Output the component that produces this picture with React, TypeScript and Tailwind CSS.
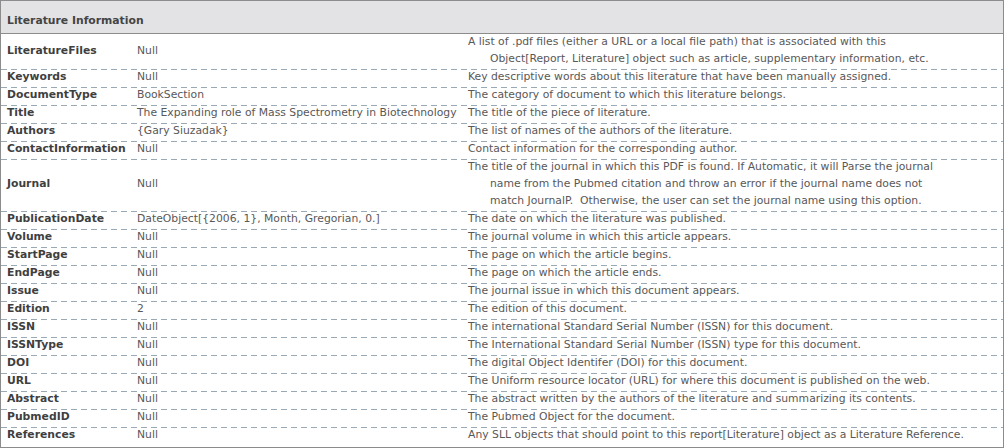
import React from 'react'

type Row = { name: string; value: string; desc: string[] }

const rows: Row[] = [
    { name: 'LiteratureFiles', value: 'Null', desc: ['A list of .pdf files (either a URL or a local file path) that is associated with this', 'Object[Report, Literature] object such as article, supplementary information, etc.'] },
    { name: 'Keywords', value: 'Null', desc: ['Key descriptive words about this literature that have been manually assigned.'] },
    { name: 'DocumentType', value: 'BookSection', desc: ['The category of document to which this literature belongs.'] },
    { name: 'Title', value: 'The Expanding role of Mass Spectrometry in Biotechnology', desc: ['The title of the piece of literature.'] },
    { name: 'Authors', value: '{Gary Siuzadak}', desc: ['The list of names of the authors of the literature.'] },
    { name: 'ContactInformation', value: 'Null', desc: ['Contact information for the corresponding author.'] },
    { name: 'Journal', value: 'Null', desc: ['The title of the journal in which this PDF is found. If Automatic, it will Parse the journal', 'name from the Pubmed citation and throw an error if the journal name does not', 'match JournalP.\u00a0 Otherwise, the user can set the journal name using this option.'] },
    { name: 'PublicationDate', value: 'DateObject[{2006, 1}, Month, Gregorian, 0.]', desc: ['The date on which the literature was published.'] },
    { name: 'Volume', value: 'Null', desc: ['The journal volume in which this article appears.'] },
    { name: 'StartPage', value: 'Null', desc: ['The page on which the article begins.'] },
    { name: 'EndPage', value: 'Null', desc: ['The page on which the article ends.'] },
    { name: 'Issue', value: 'Null', desc: ['The journal issue in which this document appears.'] },
    { name: 'Edition', value: '2', desc: ['The edition of this document.'] },
    { name: 'ISSN', value: 'Null', desc: ['The international Standard Serial Number (ISSN) for this document.'] },
    { name: 'ISSNType', value: 'Null', desc: ['The International Standard Serial Number (ISSN) type for this document.'] },
    { name: 'DOI', value: 'Null', desc: ['The digital Object Identifer (DOI) for this document.'] },
    { name: 'URL', value: 'Null', desc: ['The Uniform resource locator (URL) for where this document is published on the web.'] },
    { name: 'Abstract', value: 'Null', desc: ['The abstract written by the authors of the literature and summarizing its contents.'] },
    { name: 'PubmedID', value: 'Null', desc: ['The Pubmed Object for the document.'] },
    { name: 'References', value: 'Null', desc: ['Any SLL objects that should point to this report[Literature] object as a Literature Reference.'] },
]

export default function App() {
    return (
        <div className="w-[1004px] h-[448px] bg-white font-['DejaVu_Sans',sans-serif] text-[10.8px]">
            <div className="border border-[#8c8c8c] h-[448px] flex flex-col overflow-hidden">
                <div className="h-[33px] shrink-0 bg-[#e3e3e5] border-b border-[#8c8c8c] pl-[6px] pt-[13px] leading-[14px] font-bold text-[#444]">
                    Literature Information
                </div>
                {rows.map((r, i) => (
                    <div key={r.name} className="shrink-0">
                        {i > 0 && (
                            <div className="h-px bg-[repeating-linear-gradient(to_right,#9aa9b6_0_6px,transparent_6px_10px)]" />
                        )}
                        <div className={'grid grid-cols-[130px_331px_1fr] items-center leading-[17px] ' + (i === 0 ? 'pt-[1px]' : '')}>
                            <div className="pl-[6px] -mt-[2px] mb-[2px] font-bold text-[#3f3f3f] whitespace-nowrap">{r.name}</div>
                            <div className="pl-[6px] -mt-[2px] mb-[2px] text-[#585858] whitespace-nowrap">{r.value}</div>
                            <div className="pl-[6px] -mt-[2px] mb-[2px] text-[#585858] whitespace-nowrap">
                                {r.desc.map((d, j) => (
                                    <div key={j} className={j > 0 ? 'pl-[22px]' : ''}>{d}</div>
                                ))}
                            </div>
                        </div>
                    </div>
                ))}
            </div>
        </div>
    )
}
